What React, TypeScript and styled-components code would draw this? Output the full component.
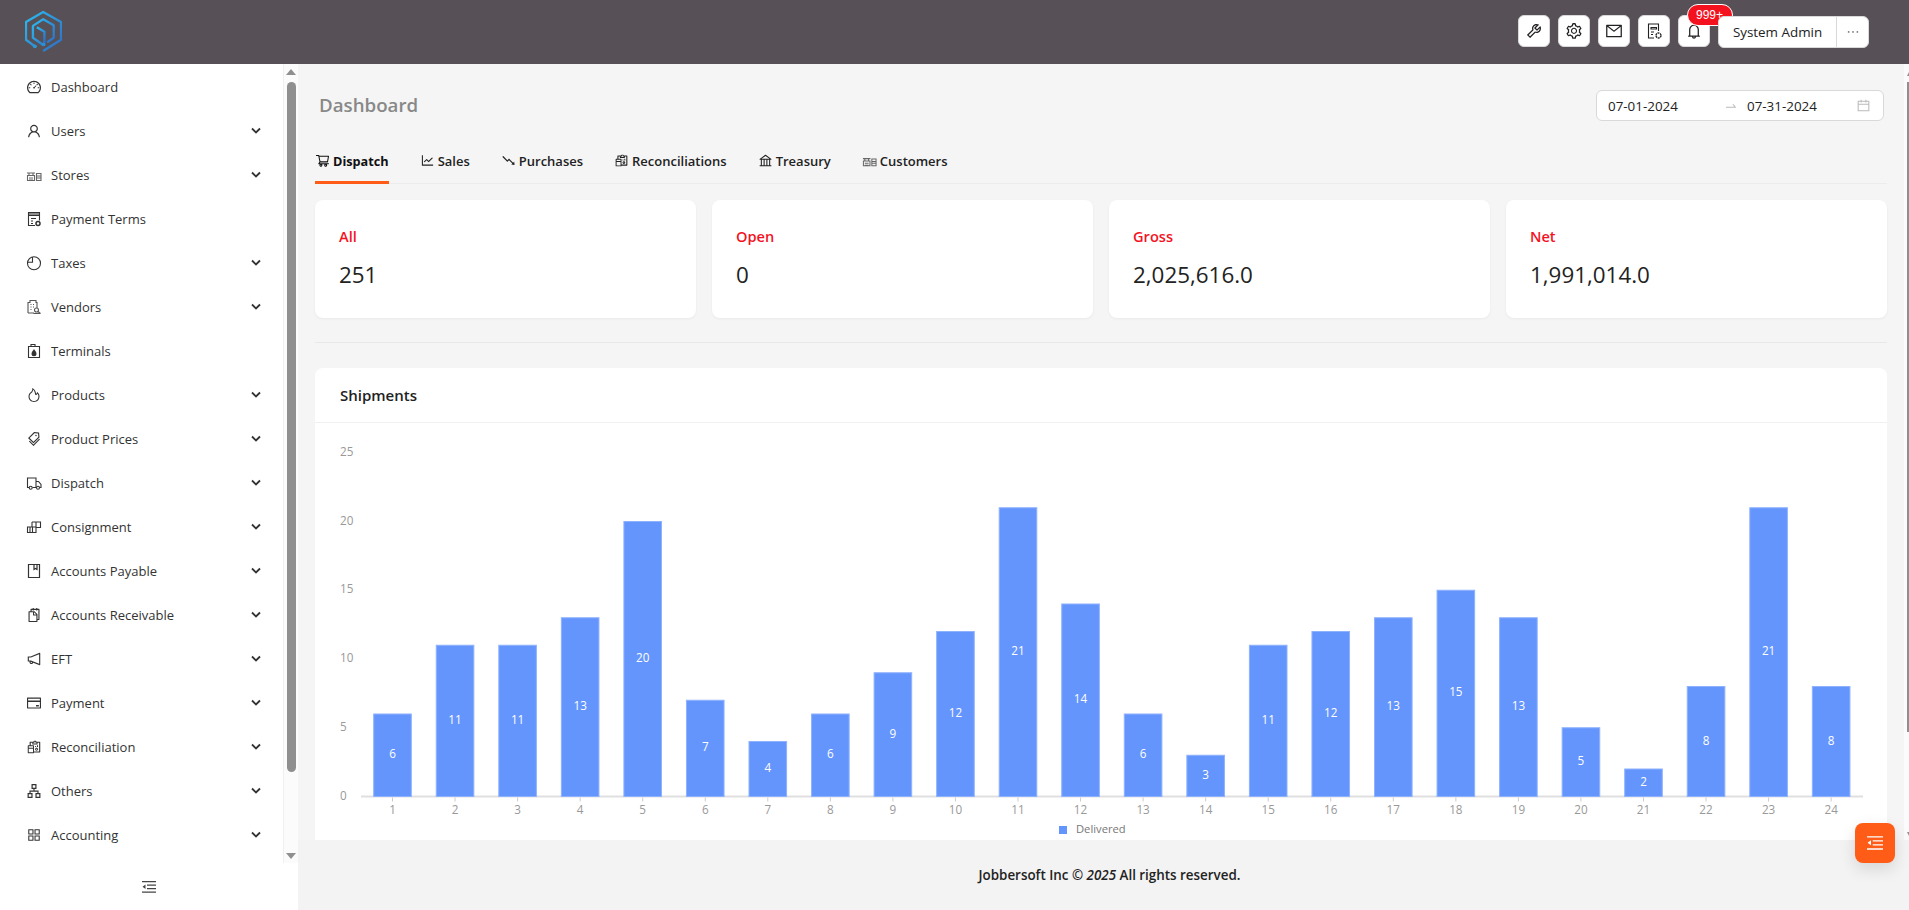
import React from 'react';
import styled, { createGlobalStyle } from 'styled-components';
import {
  AiOutlineDashboard,
  AiOutlineUser,
  AiOutlineFire,
  AiOutlineTags,
  AiOutlineSnippets,
  AiOutlineNotification,
  AiOutlineCreditCard,
  AiOutlineReconciliation,
  AiOutlineApartment,
  AiOutlineAppstore,
  AiOutlineTool,
  AiOutlineSetting,
  AiOutlineMail,
  AiOutlineBell,
  AiOutlineEllipsis,
  AiOutlineShoppingCart,
  AiOutlineLineChart,
  AiOutlineFall,
  AiOutlineBank,
  AiOutlineCalendar,
  AiOutlineSwapRight,
} from 'react-icons/ai';

const GlobalStyle = createGlobalStyle`
  html, body, #root {
    height: 100%;
  }
  body {
    margin: 0;
    overflow: hidden;
    font-family: "Open Sans", "Noto Sans", sans-serif;
    font-size: 13px;
    color: #222;
    background: #f5f5f5;
  }
`;

const Page = styled.div`
  height: 100vh;
  display: flex;
  flex-direction: column;
  overflow: hidden;
`;

const TopBar = styled.header`
  height: 64px;
  flex: none;
  background: #575057;
  display: flex;
  align-items: center;
  padding: 0 40px 0 25px;
`;

const LogoMark = styled.svg`
  width: 37px;
  height: 43px;
  margin-top: -1px;
`;

const TopActions = styled.div`
  margin-left: auto;
  display: flex;
  align-items: center;
  gap: 8px;
`;

const IconButton = styled.button`
  position: relative;
  width: 32px;
  height: 32px;
  padding: 0;
  border: 1px solid #d9d9d9;
  border-radius: 6px;
  background: #fff;
  color: #222;
  font-size: 18px;
  display: flex;
  align-items: center;
  justify-content: center;
  margin-top: -2px;
`;

const CountBadge = styled.span`
  position: absolute;
  top: -12px;
  left: 8px;
  width: 46px;
  height: 22px;
  box-sizing: border-box;
  border: 1px solid #fff;
  border-radius: 11px;
  background: #f5121f;
  color: #fff;
  font-size: 12px;
  line-height: 21px;
  text-align: left;
  padding-left: 8px;
`;

const UserGroup = styled.div`
  position: relative;
  z-index: 2;
  display: flex;
  height: 32px;
  border-radius: 6px;
  background: #fff;
  border: 1px solid #d9d9d9;
  box-sizing: border-box;
`;

const UserName = styled.span`
  width: 117px;
  display: flex;
  align-items: center;
  justify-content: center;
  border-right: 1px solid #d9d9d9;
  font-size: 13.4px;
  color: #222;
`;

const UserMore = styled.span`
  width: 31px;
  display: flex;
  align-items: center;
  justify-content: center;
  font-size: 16px;
  color: #777;
`;

const Body = styled.div`
  flex: 1;
  min-height: 0;
  display: flex;
`;

const Sidebar = styled.aside`
  width: 298px;
  flex: none;
  background: #fff;
  display: flex;
  flex-direction: column;
`;

const SideScroll = styled.div`
  flex: 1;
  min-height: 0;
  display: flex;
`;

const MenuList = styled.nav`
  flex: 1;
  overflow: hidden;
  padding-top: 1px;
`;

const MenuRow = styled.div`
  height: 44px;
  display: flex;
  align-items: center;
  padding: 0 22px 0 26px;
  color: #333;
  svg.lead {
    width: 16px;
    height: 16px;
    flex: none;
    margin-right: 9px;
  }
`;

const MenuLabel = styled.span`
  flex: 1;
  font-size: 13px;
`;

const Chevron = styled.svg`
  width: 10px;
  height: 7px;
  margin-top: -1px;
`;

const Track = styled.div`
  width: 15px;
  flex: none;
  box-sizing: border-box;
  background: #fbfbfb;
  border-left: 1px solid #f0f0f0;
  display: flex;
  flex-direction: column;
  align-items: center;
  padding: 5px 0 4px 0;
`;

const Arrow = styled.div<{ $down?: boolean }>`
  width: 0;
  height: 0;
  flex: none;
  border-left: 5px solid transparent;
  border-right: 5px solid transparent;
  ${(p) => (p.$down ? 'border-top: 6px solid #8f8f8f;' : 'border-bottom: 6px solid #8f8f8f;')}
`;

const Thumb = styled.div`
  width: 9px;
  height: 690px;
  flex: none;
  margin: 7px 0 auto;
  border-radius: 5px;
  background: #8f8f8f;
`;

const CollapseBar = styled.div`
  height: 47px;
  flex: none;
  display: flex;
  align-items: center;
  justify-content: center;
  color: #444;
  svg {
    width: 14px;
    height: 12px;
  }
`;

const Main = styled.main`
  flex: 1;
  min-width: 0;
  display: flex;
  flex-direction: column;
  background: #f5f5f5;
`;

const MainScroll = styled.div`
  flex: 1;
  min-height: 0;
  display: flex;
`;

const Content = styled.div`
  flex: 1;
  min-width: 0;
  overflow: hidden;
  padding: 26px 17px 0;
`;

const MainTrack = styled.div`
  width: 5px;
  flex: none;
  background: #fbfbfb;
  overflow: hidden;
  display: flex;
  flex-direction: column;
  align-items: flex-end;
  padding-top: 8px;
`;

const MainArrow = styled.div<{ $down?: boolean }>`
  width: 0;
  height: 0;
  border-left: 2px solid transparent;
  ${(p) => (p.$down ? 'border-top: 4px solid #8f8f8f; margin-top: auto; margin-bottom: 4px;' : 'border-bottom: 4px solid #8f8f8f;')}
`;

const MainThumb = styled.div`
  width: 2px;
  height: 650px;
  margin-top: 6px;
  background: #8f8f8f;
`;

const TitleRow = styled.div`
  display: flex;
  align-items: center;
  justify-content: space-between;
  padding-right: 3px;
`;

const PageTitle = styled.h1`
  margin: -2px 0 0 4px;
  font-size: 18.7px;
  font-weight: 600;
  color: #888;
`;

const DateRange = styled.div`
  width: 288px;
  height: 31px;
  box-sizing: border-box;
  display: flex;
  align-items: center;
  background: #fff;
  border: 1px solid #d9d9d9;
  border-radius: 6px;
  padding: 0 12px 0 11px;
  font-size: 13.4px;
  color: #222;
`;

const DateValue = styled.span`
  width: 116px;
`;

const DateSep = styled.span`
  width: 23px;
  display: flex;
  color: #bbb;
  font-size: 14px;
`;

const DateIcon = styled.span`
  margin-left: auto;
  display: flex;
  color: #bbb;
  font-size: 15px;
`;

const TabBar = styled.div`
  height: 47px;
  margin-top: 16px;
  display: flex;
  gap: 31px;
  border-bottom: 1px solid #ececec;
  box-sizing: border-box;
`;

const Tab = styled.div<{ $active?: boolean }>`
  display: flex;
  align-items: center;
  gap: 3px;
  margin-bottom: -1px;
  font-size: ${(p) => (p.$active ? 12.7 : 13)}px;
  font-weight: ${(p) => (p.$active ? 700 : 600)};
  color: ${(p) => (p.$active ? '#111' : '#222')};
  border-bottom: 3px solid ${(p) => (p.$active ? '#ff5c17' : 'transparent')};
  padding-top: 3px;
  svg {
    width: 15px;
    height: 15px;
    flex: none;
  }
`;

const StatGrid = styled.div`
  margin-top: 16px;
  display: grid;
  grid-template-columns: repeat(4, 1fr);
  gap: 16px;
`;

const StatCard = styled.div`
  background: #fff;
  border-radius: 8px;
  padding: 25px 24px 27px;
  box-shadow: 0 1px 3px rgba(0, 0, 0, 0.05);
`;

const StatLabel = styled.div`
  font-size: 14.6px;
  line-height: 22px;
  font-weight: 600;
  color: #f5121f;
`;

const StatValue = styled.div`
  margin-top: 12px;
  font-size: 22.4px;
  line-height: 32px;
  color: #222;
`;

const Rule = styled.hr`
  margin: 24px 0 25px;
  border: 0;
  border-top: 1px solid #e8e8e8;
`;

const ChartCard = styled.section`
  background: #fff;
  border-radius: 8px 8px 0 0;
`;

const ChartHead = styled.div`
  height: 55px;
  box-sizing: border-box;
  padding: 0 25px;
  display: flex;
  align-items: center;
  border-bottom: 1px solid #f0f0f0;
  font-size: 15px;
  font-weight: 600;
  color: #222;
`;

const ChartSvg = styled.svg`
  display: block;
  width: 100%;
  height: 440px;
  font-family: "Open Sans", sans-serif;
  font-size: 11.7px;
`;

const LegendText = styled.text`
  font-size: 11.2px;
`;

const Footer = styled.footer`
  height: 70px;
  flex: none;
  display: flex;
  align-items: center;
  justify-content: center;
  padding-left: 12px;
  background: #f3f3f3;
  font-size: 13.4px;
  font-weight: 600;
  color: #222;
`;

const FloatButton = styled.button`
  position: fixed;
  left: 1855px;
  top: 823px;
  width: 40px;
  height: 40px;
  padding: 0;
  border: 0;
  border-radius: 8px;
  background: #ff5c17;
  color: #fff;
  box-shadow: 0 6px 16px rgba(0, 0, 0, 0.12);
  display: flex;
  align-items: center;
  justify-content: center;
  svg {
    width: 16px;
    height: 14px;
  }
`;

type SvgProps = React.SVGProps<SVGSVGElement>;

const line = { fill: 'none', stroke: 'currentColor', strokeWidth: 1.1 } as const;

const StoreIcon = (p: SvgProps) => (
  <svg viewBox="0 0 16 16" {...p}>
    <g {...line} stroke="#666">
      <path d="M1 6h8M3 6v2M7 6v2M1 8.500h8M1.500 8.500v5h7v-5M3 11h4M3 13h4M10.500 6.500h4.500v7h-4.500zM10.500 9h4.500M10.500 11h4.500" />
    </g>
  </svg>
);

const TermsIcon = (p: SvgProps) => (
  <svg viewBox="0 0 16 16" {...p}>
    <g {...line}>
      <path d="M9 14.500H2.500v-13h11v8M2.500 4.500h11M4 1.500v3M6 1.500v3M8 1.500v3M10 1.500v3M12 1.500v3M5 7.500h5M5 10h2M5 12.500h2" />
      <circle cx="12" cy="12.500" r="2" strokeWidth="1.500" />
    </g>
  </svg>
);

const TaxIcon = (p: SvgProps) => (
  <svg viewBox="0 0 16 16" {...p}>
    <g {...line}>
      <circle cx="8" cy="8.300" r="6.500" />
      <path d="M6.500 2v5.300H1.600" />
    </g>
  </svg>
);

const VendorIcon = (p: SvgProps) => (
  <svg viewBox="0 0 16 16" {...p}>
    <g {...line} stroke="#555">
      <path d="M2 14V3.500h2V1.500h6v2h1V9M2 14h6M4.500 5.500h1M7 5.500h1M4.500 8h1M7 8h1M4.500 10.500h1" />
      <circle cx="10.500" cy="11" r="2" />
      <path d="M12 12.500l2.500 2M7.500 14.500h7" />
    </g>
  </svg>
);

const TerminalIcon = (p: SvgProps) => (
  <svg viewBox="0 0 16 16" {...p}>
    <path {...line} d="M2.500 14.500v-11h11v11zM5 3.500v-2h4v2" />
    <path d="M8 6c1 1.600 2.500 3 2.500 4.800a2.500 2.500 0 0 1-5 0C5.500 9 7 7.600 8 6z" fill="currentColor" />
  </svg>
);

const TruckIcon = (p: SvgProps) => (
  <svg viewBox="0 0 16 16" {...p}>
    <g {...line}>
      <path d="M3 12.500H1.500V3h8.500v9.500H6.500M10 6.500h2.500l2.500 3v3h-1.500M10 12.500h.5" />
      <circle cx="4.700" cy="12.800" r="1.500" />
      <circle cx="12" cy="12.800" r="1.500" />
    </g>
  </svg>
);

const GoodsIcon = (p: SvgProps) => (
  <svg viewBox="0 0 16 16" {...p}>
    <path {...line} d="M1.500 8h5v5.500h-5zM4 8v5.500M6.500 8h3.500v5.500H6.500M6 3h8.500v5.500H10M6 3v5M10 3v5.500" />
  </svg>
);

const BookIcon = (p: SvgProps) => (
  <svg viewBox="0 0 16 16" {...p}>
    <path {...line} strokeWidth={1.2} d="M2.500 1.500h11v13h-11zM8 1.500v5l1.500-1 1.500 1v-5" />
  </svg>
);

const ReportIcon = (p: SvgProps) => (
  <svg viewBox="0 0 18 18" {...p}>
    <g {...line}>
      <path d="M9 16H3.500V2h10v7M6 5.500h5.500v1.500H6zM6 10h3M6 12.500h2" />
      <circle cx="13.500" cy="13.500" r="2.500" strokeWidth="1.400" strokeDasharray="2 .6" />
    </g>
  </svg>
);

const FoldIcon = (p: SvgProps) => (
  <svg viewBox="0 0 14 12" {...p}>
    <path fill="currentColor" d="M0 0h14v1.200H0zM5 3.500h9v1.200H5zM5 7h9v1.200H5zM0 10.600h14v1.200H0zM3.500 3.600v4.400L.5 5.800z" />
  </svg>
);

const Logo = () => (
  <LogoMark viewBox="75 36 112 130">
    <defs>
      <linearGradient id="logoGrad" x1="0" y1="0" x2="1" y2="1">
        <stop offset="0" stopColor="#2bbcf0" />
        <stop offset="1" stopColor="#2f6cc4" />
      </linearGradient>
    </defs>
    <g fill="none" stroke="url(#logoGrad)" strokeWidth="7" strokeLinejoin="round">
      <path d="M105 146L78 126V72L130 42L184 72V126L130 160" />
      <path d="M130 142L99 120V84L130 64L162 82V120L142 134" />
      <path d="M111 88L134 102V138" />
    </g>
    <circle cx="105" cy="146" r="6" fill="#2a9ad6" />
    <circle cx="131" cy="140" r="6" fill="#2a8ed0" />
  </LogoMark>
);

const menu: { label: string; Icon: React.ComponentType<any>; sub?: boolean }[] = [
  { label: 'Dashboard', Icon: AiOutlineDashboard },
  { label: 'Users', Icon: AiOutlineUser, sub: true },
  { label: 'Stores', Icon: StoreIcon, sub: true },
  { label: 'Payment Terms', Icon: TermsIcon },
  { label: 'Taxes', Icon: TaxIcon, sub: true },
  { label: 'Vendors', Icon: VendorIcon, sub: true },
  { label: 'Terminals', Icon: TerminalIcon },
  { label: 'Products', Icon: AiOutlineFire, sub: true },
  { label: 'Product Prices', Icon: AiOutlineTags, sub: true },
  { label: 'Dispatch', Icon: TruckIcon, sub: true },
  { label: 'Consignment', Icon: GoodsIcon, sub: true },
  { label: 'Accounts Payable', Icon: BookIcon, sub: true },
  { label: 'Accounts Receivable', Icon: AiOutlineSnippets, sub: true },
  { label: 'EFT', Icon: AiOutlineNotification, sub: true },
  { label: 'Payment', Icon: AiOutlineCreditCard, sub: true },
  { label: 'Reconciliation', Icon: AiOutlineReconciliation, sub: true },
  { label: 'Others', Icon: AiOutlineApartment, sub: true },
  { label: 'Accounting', Icon: AiOutlineAppstore, sub: true },
];

const tabs: { label: string; Icon: React.ComponentType<any> }[] = [
  { label: 'Dispatch', Icon: AiOutlineShoppingCart },
  { label: 'Sales', Icon: AiOutlineLineChart },
  { label: 'Purchases', Icon: AiOutlineFall },
  { label: 'Reconciliations', Icon: AiOutlineReconciliation },
  { label: 'Treasury', Icon: AiOutlineBank },
  { label: 'Customers', Icon: StoreIcon },
];

const stats = [
  { label: 'All', value: '251' },
  { label: 'Open', value: '0' },
  { label: 'Gross', value: '2,025,616.0' },
  { label: 'Net', value: '1,991,014.0' },
];

const shipments = [6, 11, 11, 13, 20, 7, 4, 6, 9, 12, 21, 14, 6, 3, 11, 12, 13, 15, 13, 5, 2, 8, 21, 8];

// chart coords are relative to the card body (x - 315, y - 423)
const BASE_Y = 373.5;
const UNIT = 13.75;
const FIRST_X = 77.5;
const STEP = 62.55;
const BAR_W = 37.6;

function ShipmentsChart() {
  return (
    <ChartSvg>
      {[0, 5, 10, 15, 20, 25].map((v) => (
        <text key={v} x={25} y={BASE_Y - 2 - v * UNIT} fill="#999" dominantBaseline="central">
          {v}
        </text>
      ))}
      <rect x={46} y={BASE_Y - 1} width={1502} height={2} fill="#e0e0e0" />
      {shipments.map((v, i) => {
        const cx = FIRST_X + i * STEP;
        const h = v * UNIT;
        return (
          <g key={i}>
            <line x1={cx} x2={cx} y1={BASE_Y + 1} y2={BASE_Y + 5} stroke="#ccc" />
            <rect
              x={cx - BAR_W / 2}
              y={BASE_Y - h}
              width={BAR_W}
              height={h}
              fill="#6495fc"
              stroke="#8fb2ff"
              strokeWidth={1}
            />
            <text x={cx} y={BASE_Y - h / 2 - 2} fill="#fff" textAnchor="middle" dominantBaseline="central">
              {v}
            </text>
            <text x={cx} y={BASE_Y + 12} fill="#999" textAnchor="middle" dominantBaseline="central">
              {i + 1}
            </text>
          </g>
        );
      })}
      <rect x={744} y={403} width={8} height={8} fill="#6495fc" />
      <LegendText x={761} y={405.5} fill="#777" dominantBaseline="central">
        Delivered
      </LegendText>
    </ChartSvg>
  );
}

export default function App() {
  return (
    <Page>
      <GlobalStyle />
      <TopBar>
        <Logo />
        <TopActions>
          <IconButton>
            <AiOutlineTool />
          </IconButton>
          <IconButton>
            <AiOutlineSetting />
          </IconButton>
          <IconButton>
            <AiOutlineMail />
          </IconButton>
          <IconButton>
            <ReportIcon width={18} height={18} />
          </IconButton>
          <IconButton>
            <AiOutlineBell />
            <CountBadge>999+</CountBadge>
          </IconButton>
          <UserGroup>
            <UserName>System Admin</UserName>
            <UserMore>
              <AiOutlineEllipsis />
            </UserMore>
          </UserGroup>
        </TopActions>
      </TopBar>
      <Body>
        <Sidebar>
          <SideScroll>
            <MenuList>
              {menu.map(({ label, Icon, sub }) => (
                <MenuRow key={label}>
                  <Icon className="lead" />
                  <MenuLabel>{label}</MenuLabel>
                  {sub && (
                    <Chevron viewBox="0 0 10 7">
                      <path d="M1 1.500l4 4 4-4" fill="none" stroke="#333" strokeWidth="1.800" />
                    </Chevron>
                  )}
                </MenuRow>
              ))}
            </MenuList>
            <Track>
              <Arrow />
              <Thumb />
              <Arrow $down />
            </Track>
          </SideScroll>
          <CollapseBar>
            <FoldIcon />
          </CollapseBar>
        </Sidebar>
        <Main>
          <MainScroll>
            <Content>
              <TitleRow>
                <PageTitle>Dashboard</PageTitle>
                <DateRange>
                  <DateValue>07-01-2024</DateValue>
                  <DateSep>
                    <AiOutlineSwapRight />
                  </DateSep>
                  <span>07-31-2024</span>
                  <DateIcon>
                    <AiOutlineCalendar />
                  </DateIcon>
                </DateRange>
              </TitleRow>
              <TabBar>
                {tabs.map(({ label, Icon }, i) => (
                  <Tab key={label} $active={i === 0}>
                    <Icon />
                    {label}
                  </Tab>
                ))}
              </TabBar>
              <StatGrid>
                {stats.map((s) => (
                  <StatCard key={s.label}>
                    <StatLabel>{s.label}</StatLabel>
                    <StatValue>{s.value}</StatValue>
                  </StatCard>
                ))}
              </StatGrid>
              <Rule />
              <ChartCard>
                <ChartHead>Shipments</ChartHead>
                <ShipmentsChart />
              </ChartCard>
            </Content>
            <MainTrack>
              <MainArrow />
              <MainThumb />
              <MainArrow $down />
            </MainTrack>
          </MainScroll>
          <Footer>
            <span>
              Jobbersoft Inc © <em>2025</em> All rights reserved.
            </span>
          </Footer>
        </Main>
      </Body>
      <FloatButton>
        <FoldIcon />
      </FloatButton>
    </Page>
  );
}
